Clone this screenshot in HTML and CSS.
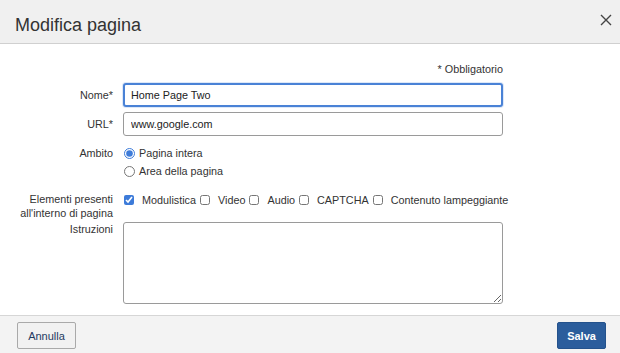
FILE: index.html
```html
<!DOCTYPE html>
<html lang="it">
<head>
<meta charset="utf-8">
<title>Modifica pagina</title>
<link rel="stylesheet" href="styles.css">
</head>
<body>
<div class="dialog">
  <header class="head">
    <h1 class="title">Modifica pagina</h1>
    <button class="close" aria-label="Chiudi">
      <svg width="12" height="12" viewBox="0 0 12 12"><path d="M1 1 L11 11 M11 1 L1 11" stroke="#444" stroke-width="1.4" fill="none"/></svg>
    </button>
  </header>
  <main class="body">
    <form class="form">
      <div class="req">* Obbligatorio</div>

      <label class="lbl" for="nome">Nome*</label>
      <input id="nome" class="field focus" type="text" value="Home Page Two">

      <label class="lbl" for="url">URL*</label>
      <input id="url" class="field" type="text" value="www.google.com">

      <div class="lbl lbl-radio">Ambito</div>
      <div class="radios">
        <label class="opt"><input type="radio" name="ambito" checked><span>Pagina intera</span></label>
        <label class="opt"><input type="radio" name="ambito"><span>Area della pagina</span></label>
      </div>

      <div class="lbl lbl-multi">Elementi presenti<br>all'interno di pagina</div>
      <div class="checks">
        <label class="chk"><input type="checkbox" checked><span>Modulistica</span></label>
        <label class="chk"><input type="checkbox"><span>Video</span></label>
        <label class="chk"><input type="checkbox"><span>Audio</span></label>
        <label class="chk"><input type="checkbox"><span>CAPTCHA</span></label>
        <label class="chk"><input type="checkbox"><span>Contenuto lampeggiante</span></label>
      </div>

      <label class="lbl lbl-ta" for="istr">Istruzioni</label>
      <textarea id="istr" class="area"></textarea>
    </form>
  </main>
  <footer class="foot">
    <button class="btn btn-cancel" type="button">Annulla</button>
    <button class="btn btn-save" type="button">Salva</button>
  </footer>
</div>
</body>
</html>
```

FILE: styles.css
```css
* { box-sizing: border-box; }
html, body { margin: 0; padding: 0; }
body {
  width: 620px;
  height: 353px;
  overflow: hidden;
  font-family: "Liberation Sans", Arial, sans-serif;
  font-size: 10.8px;
  color: #333;
  background: #fff;
}
.dialog {
  display: flex;
  flex-direction: column;
  height: 353px;
}
.head {
  height: 44px;
  flex: none;
  display: flex;
  align-items: center;
  justify-content: space-between;
  padding: 0 7px 0 15px;
  background: #f0f0f0;
  border-bottom: 1px solid #d0d0d0;
}
.title {
  margin: 0;
  font-size: 18px;
  font-weight: normal;
  color: #333;
  padding-top: 8px;
}
.close {
  border: 0;
  background: transparent;
  padding: 0;
  width: 14px;
  height: 14px;
  display: flex;
  align-items: center;
  justify-content: center;
  margin-top: -4px;
}
.body {
  flex: 1;
  padding-top: 18px;
}
.form {
  display: grid;
  grid-template-columns: 113px 380px;
  column-gap: 10px;
  align-items: start;
}
.req {
  grid-column: 2;
  text-align: right;
  line-height: 14px;
  color: #333;
  margin-bottom: 7px;
}
.lbl {
  grid-column: 1;
  text-align: right;
  line-height: 24px;
  color: #333;
}
.field {
  grid-column: 2;
  height: 24px;
  margin-bottom: 5px;
  border: 1px solid #9a9a9a;
  border-radius: 3px;
  padding: 0 7px;
  font-family: "Liberation Sans", Arial, sans-serif;
  font-size: 10.8px;
  color: #222;
  background: #fff;
  outline: none;
}
.field.focus {
  border: 2px solid #4a82d6;
  padding: 0 6px;
  box-shadow: 0 0 0 1px #dde8f8;
}
.lbl-radio {
  line-height: 18px;
  margin-top: 3px;
}
.radios {
  grid-column: 2;
  margin-top: 3px;
  display: flex;
  flex-direction: column;
}
.opt {
  display: flex;
  align-items: center;
  height: 18px;
}
.opt input {
  width: 11px;
  height: 11px;
  margin: 0 4px 0 1px;
  accent-color: #3d7bd9;
}
.lbl-multi {
  line-height: 14px;
  margin-top: 12px;
}
.checks {
  grid-column: 2;
  margin-top: 12px;
  display: flex;
  align-items: center;
  height: 14px;
  white-space: nowrap;
  position: relative;
  top: 1px;
}
.chk {
  display: flex;
  align-items: center;
  margin-right: 3px;
}
.chk input {
  width: 10px;
  height: 10px;
  margin: 0 8px 0 1px;
  accent-color: #3d7bd9;
}
.lbl-ta {
  line-height: 14px;
  margin-top: 2px;
}
.area {
  grid-column: 2;
  margin-top: 2px;
  height: 82px;
  border: 1px solid #9a9a9a;
  border-radius: 3px;
  resize: vertical;
  font-family: "Liberation Sans", Arial, sans-serif;
  font-size: 10.8px;
}
.foot {
  height: 38px;
  flex: none;
  display: flex;
  justify-content: space-between;
  align-items: flex-start;
  padding: 6px 14px 0 17px;
  background: #f3f3f3;
  border-top: 1px solid #d6d6d6;
}
.btn {
  height: 27px;
  font-family: "Liberation Sans", Arial, sans-serif;
  font-size: 11px;
  border-radius: 2px;
  padding: 0;
}
.btn-cancel {
  width: 59px;
  background: #f1f1f1;
  border: 1px solid #a9a9a9;
  color: #1f3a5f;
}
.btn-save {
  width: 49px;
  background: #2b5d9c;
  border: 1px solid #24528c;
  color: #fff;
  font-weight: bold;
}
```
